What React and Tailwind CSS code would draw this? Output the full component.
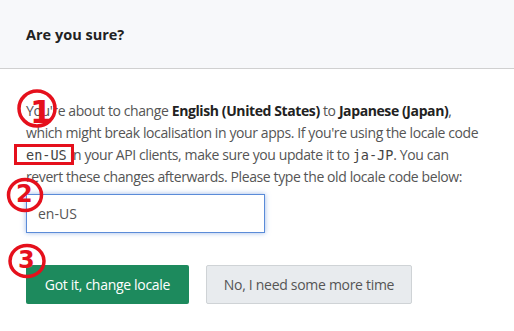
export default function App() {
  const sans = { fontFamily: '"Open Sans", "Noto Sans", sans-serif' };
  const mono = { fontFamily: '"DejaVu Sans Mono", "Liberation Mono", monospace' };
  const hand = { fontFamily: '"DejaVu Sans", sans-serif' };
  return (
    <div className="relative w-[514px] h-[331px] bg-white overflow-hidden" style={sans}>
      <div className="h-[69px] bg-[#f7f8fa] border-b border-[#d0d0d0] flex items-center px-[26px]">
        <h2 className="text-[14.5px] font-bold text-[#222] pt-[1px]">Are you sure?</h2>
      </div>
      <div className="px-[26px] pt-[31px] flex flex-col items-start">
        <p className="text-[14px] leading-[22px] text-[#555] tracking-[-0.4px]">
          You're about to change <b className="text-[#222]">English (United States)</b> to{" "}
          <b className="text-[#222]">Japanese (Japan)</b>, which might break localisation in your apps. If
          you're using the locale code{" "}
          <code className="text-[13.5px] text-[#444] tracking-normal" style={mono}>en-US</code> in
          your API clients, make sure you update it to{" "}
          <code className="text-[13.5px] text-[#444] tracking-normal" style={mono}>ja-JP</code>. You
          can revert these changes afterwards. Please type the old locale code below:
        </p>
        <input
          defaultValue="en-US"
          className="mt-[6px] w-[239px] h-[39px] border border-[#5a8bd8] shadow-[0_0_5px_rgba(90,139,216,0.6)] px-[11px] text-[14px] text-[#555] outline-none"
          style={sans}
        />
        <div className="mt-[32px] flex gap-[17px]">
          <button className="h-[39px] w-[163px] rounded-[2px] bg-[#1d8a5d] text-white text-[14px] tracking-[-0.3px]" style={sans}>
            Got it, change locale
          </button>
          <button className="h-[39px] w-[206px] rounded-[2px] bg-[#e8ebee] border border-[#cfd3d6] text-[#555] text-[14px] tracking-[-0.3px]" style={sans}>
            No, I need some more time
          </button>
        </div>
      </div>

      {/* annotations drawn over the screenshot */}
      <div className="absolute left-[14px] top-[144px] w-[60px] h-[21px] border-[3px] border-[#e5101c]" />
      <div className="absolute left-[17px] top-[89px] w-[40px] h-[44px]">
        <svg width="40" height="40" className="absolute inset-0"><ellipse cx="20" cy="19.5" rx="18" ry="17.5" fill="none" stroke="#e5101c" strokeWidth="3.5" /></svg>
        <span className="absolute left-[13px] top-[7px] text-[#e5101c] text-[32px] font-bold leading-none" style={hand}>1</span>
      </div>
      <div className="absolute left-[6px] top-[177px] w-[38px] h-[36px]">
        <svg width="38" height="36" className="absolute inset-0"><ellipse cx="19" cy="18" rx="16.5" ry="15.5" fill="none" stroke="#e5101c" strokeWidth="3.5" /></svg>
        <span className="absolute left-[10px] top-[5px] text-[#e5101c] text-[24px] font-bold leading-none" style={hand}>2</span>
      </div>
      <div className="absolute left-[7px] top-[243px] w-[40px] h-[36px]">
        <svg width="40" height="36" className="absolute inset-0"><ellipse cx="20" cy="18" rx="17" ry="15.5" fill="none" stroke="#e5101c" strokeWidth="3.5" /></svg>
        <span className="absolute left-[11px] top-[5px] text-[#e5101c] text-[24px] font-bold leading-none" style={hand}>3</span>
      </div>
    </div>
  );
}
